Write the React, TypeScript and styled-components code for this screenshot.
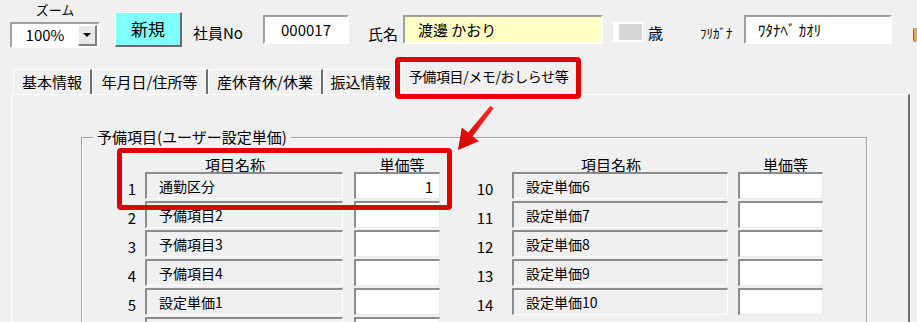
import styled, { createGlobalStyle } from 'styled-components';

const GlobalStyle = createGlobalStyle`
  html, body {
    margin: 0;
    padding: 0;
    background: #f0f0f0;
  }
  body {
    font-family: "Noto Sans CJK JP", "Noto Sans", sans-serif;
    color: #000;
  }
`;

type Item = { no: number; name: string; price: string };

const leftRows: Item[] = [
  { no: 1, name: '通勤区分', price: '1' },
  { no: 2, name: '予備項目2', price: '' },
  { no: 3, name: '予備項目3', price: '' },
  { no: 4, name: '予備項目4', price: '' },
  { no: 5, name: '設定単価1', price: '' },
];

const rightRows: Item[] = [
  { no: 10, name: '設定単価6', price: '' },
  { no: 11, name: '設定単価7', price: '' },
  { no: 12, name: '設定単価8', price: '' },
  { no: 13, name: '設定単価9', price: '' },
  { no: 14, name: '設定単価10', price: '' },
];

const tabs = [
  { label: '基本情報', w: 79 },
  { label: '年月日/住所等', w: 116 },
  { label: '産休育休/休業', w: 115 },
  { label: '振込情報', w: 76 },
];

function App(): React.ReactElement {
  return (
    <Screen>
      <GlobalStyle />
      <Header>
        <ZoomGroup>
          <ZoomLabel>ズーム</ZoomLabel>
          <ZoomSelect>
            <ZoomValue>100%</ZoomValue>
            <DropButton>
              <span className="caret" />
            </DropButton>
          </ZoomSelect>
        </ZoomGroup>
        <NewButton>新規</NewButton>
        <FieldLabel $w={70} $left={11} $top={23}>
          社員No
        </FieldLabel>
        <TextBox $w={86} $center>
          000017
        </TextBox>
        <FieldLabel $w={35} $left={19} $top={24}>
          氏名
        </FieldLabel>
        <TextBox $w={200} $bg="#ffffc6">
          渡邊 かおり
        </TextBox>
        <AgeBox />
        <FieldLabel $w={52} $left={5} $top={23}>
          歳
        </FieldLabel>
        <KanaLabel>ﾌﾘｶﾞﾅ</KanaLabel>
        <TextBox $w={148} $small>
          ﾜﾀﾅﾍﾞ ｶｵﾘ
        </TextBox>
        <HelpIcon />
      </Header>

      <TabBar>
        {tabs.map((t) => (
          <Tab key={t.label} $w={t.w}>
            {t.label}
          </Tab>
        ))}
        <ActiveTab>予備項目/メモ/おしらせ等</ActiveTab>
      </TabBar>

      <Panel>
        <Group>
          <legend>予備項目(ユーザー設定単価)</legend>
          <Columns>
            <Column $numW={26} $nameW={198} $priceW={86} $gap={11}>
              <RowHighlight />
              <span />
              <NameHeader>項目名称</NameHeader>
              <PriceHeader>単価等</PriceHeader>
              {leftRows.map((r) => (
                <Row key={r.no} {...r} />
              ))}
              <span />
              <NameCell />
              <PriceCell />
            </Column>
            <Column $numW={42} $nameW={216} $priceW={85} $gap={10} $numPad={12}>
              <span />
              <NameHeader>項目名称</NameHeader>
              <PriceHeader>単価等</PriceHeader>
              {rightRows.map((r) => (
                <Row key={r.no} {...r} />
              ))}
            </Column>
          </Columns>
        </Group>
      </Panel>

      <Arrow viewBox="0 0 60 62" width={60} height={62}>
        <defs>
          <linearGradient id="arrowRed" x1="1" y1="0" x2="0" y2="1">
            <stop offset="0" stopColor="#ff2a2a" />
            <stop offset="1" stopColor="#d40000" />
          </linearGradient>
        </defs>
        <polygon
          points="53.6,13.2 50.4,10.8 28.1,37.5 21.8,32.6 18,55 39,46.2 32.7,41.3"
          fill="url(#arrowRed)"
        />
      </Arrow>
    </Screen>
  );
}

function Row({ no, name, price }: Item) {
  return (
    <>
      <Num>{no}</Num>
      <NameCell>{name}</NameCell>
      <PriceCell>{price}</PriceCell>
    </>
  );
}

export default App;

const Screen = styled.div`
  position: relative;
  width: 917px;
  height: 322px;
  overflow: hidden;
  background: #f0f0f0;
`;

const Header = styled.header`
  display: flex;
  align-items: flex-start;
  height: 60px;
  padding-left: 10px;
  box-sizing: border-box;

  & > * {
    flex-shrink: 0;
  }
`;

const ZoomGroup = styled.div`
  display: flex;
  flex-direction: column;
  align-items: center;
  width: 90px;
`;

const ZoomLabel = styled.div`
  margin-top: 2px;
  font-size: 13px;
  line-height: 16px;
`;

const ZoomSelect = styled.div`
  display: flex;
  align-items: center;
  width: 90px;
  height: 26px;
  margin-top: 4px;
  box-sizing: border-box;
  background: #fff;
  border: 2px solid;
  border-color: #a0a0a0 #fff #fff #a0a0a0;
`;

const ZoomValue = styled.span`
  flex: 1;
  text-align: center;
  font-size: 15px;
  line-height: 20px;
`;

const DropButton = styled.span`
  display: flex;
  align-items: center;
  justify-content: center;
  width: 19px;
  height: 21px;
  margin-right: 1px;
  box-sizing: border-box;
  background: #e8e8e8;
  border-style: solid;
  border-width: 1px 2px 2px 1px;
  border-color: #fff #808080 #808080 #fff;

  & .caret {
    width: 0;
    height: 0;
    border-left: 4px solid transparent;
    border-right: 4px solid transparent;
    border-top: 4px solid #000;
  }
`;

const NewButton = styled.button`
  width: 67px;
  height: 35px;
  margin: 12px 0 0 15px;
  padding: 0;
  box-sizing: border-box;
  background: #80ffff;
  border-style: solid;
  border-width: 1px 2px 2px 1px;
  border-color: #fff #6a6a6a #6a6a6a #fff;
  font-family: inherit;
  font-size: 17px;
  line-height: 22px;
  color: #000;
`;

const FieldLabel = styled.span<{ $w: number; $left: number; $top: number }>`
  width: ${({ $w }) => $w}px;
  margin: ${({ $top }) => $top}px 0 0 ${({ $left }) => $left}px;
  font-size: 15px;
  line-height: 20px;
  white-space: nowrap;
`;

const TextBox = styled.div<{ $w: number; $bg?: string; $center?: boolean; $small?: boolean }>`
  display: flex;
  align-items: center;
  justify-content: ${({ $center }) => ($center ? 'center' : 'flex-start')};
  width: ${({ $w }) => $w}px;
  height: 29px;
  margin-top: 15px;
  padding-left: ${({ $center, $small }) => ($center ? 0 : $small ? 12 : 13)}px;
  box-sizing: border-box;
  background: ${({ $bg }) => $bg ?? '#fff'};
  border-style: solid;
  border-width: 2px;
  border-color: #a0a0a0 #fff #fff #a0a0a0;
  font-size: 15px;
  white-space: nowrap;
`;

const AgeBox = styled.div`
  width: 30px;
  height: 20px;
  margin: 22px 0 0 10px;
  box-sizing: border-box;
  background: #d6d6d6;
  border-style: solid;
  border-color: #fff;
  border-width: 2px 1px 2px 6px;
`;

const KanaLabel = styled.span`
  width: 44px;
  margin-top: 24px;
  font-size: 13px;
  line-height: 18px;
  white-space: nowrap;
`;

const HelpIcon = styled.div`
  width: 12px;
  height: 14px;
  margin: 28px 0 0 21px;
  border-radius: 2px;
  background: #f3a541;
  border-left: 1px solid #6b6b6b;
`;

const TabBar = styled.nav`
  display: flex;
  align-items: flex-end;
  height: 34px;
  padding-left: 13px;
`;

const Tab = styled.div<{ $w: number }>`
  width: ${({ $w }) => $w}px;
  height: 25px;
  box-sizing: border-box;
  border-top: 1px solid #fff;
  border-left: 1px solid #fff;
  border-right: 2px solid #6f6f6f;
  text-align: center;
  font-size: 15px;
  line-height: 23px;
  white-space: nowrap;
`;

const ActiveTab = styled.div`
  position: relative;
  z-index: 1;
  width: 178px;
  height: 35px;
  margin: 0 0 -1px 1px;
  box-sizing: border-box;
  background: #f0f0f0;
  border-top: 1px solid #fff;
  border-left: 1px solid #fff;
  border-right: 2px solid #6f6f6f;
  text-align: center;
  font-size: 14px;
  line-height: 30px;
  letter-spacing: -0.4px;
  white-space: nowrap;

  &::after {
    content: '';
    position: absolute;
    top: -4px;
    left: -6px;
    right: -5px;
    bottom: -4px;
    border: 5px solid #e00000;
    border-radius: 4px;
  }
`;

const Panel = styled.section`
  width: 899px;
  height: 260px;
  margin-left: 11px;
  padding: 32px 0 0 69px;
  box-sizing: border-box;
  border-top: 1px solid #fff;
  border-left: 1px solid #fff;
  border-right: 2px solid #6f6f6f;
`;

const Group = styled.fieldset`
  width: 786px;
  height: 240px;
  margin: 0;
  padding: 0;
  box-sizing: border-box;
  border: 1px solid #a0a0a0;
  box-shadow: inset 1px 1px 0 #fff, 1px 1px 0 #fff;

  & legend {
    margin-left: 11px;
    padding: 0 4px;
    background: #f0f0f0;
    font-size: 15px;
    line-height: 20px;
  }
`;

const Columns = styled.div`
  display: flex;
  gap: 30px;
  padding: 9px 0 0 37px;
`;

const Column = styled.div<{
  $numW: number;
  $nameW: number;
  $priceW: number;
  $gap: number;
  $numPad?: number;
}>`
  --gap: ${({ $gap }) => $gap}px;
  --num-pad: ${({ $numPad }) => $numPad ?? 0}px;
  position: relative;
  display: grid;
  grid-template-columns: ${({ $numW, $nameW, $priceW, $gap }) =>
    `${$numW}px ${$nameW}px ${$priceW + $gap}px`};
  grid-template-rows: 14px;
  grid-auto-rows: 27px;
  row-gap: 2px;
`;

const NameHeader = styled.div`
  padding-right: 18px;
  text-align: center;
  font-size: 15px;
  line-height: 18px;
  white-space: nowrap;
`;

const PriceHeader = styled.div`
  margin-left: var(--gap);
  padding-left: 10px;
  text-align: center;
  font-size: 15px;
  line-height: 18px;
  white-space: nowrap;
`;

const Num = styled.div`
  display: flex;
  align-items: flex-end;
  justify-content: center;
  padding-right: var(--num-pad);
  font-size: 15px;
  line-height: 20px;
`;

const NameCell = styled.div`
  display: flex;
  align-items: center;
  padding-left: 12px;
  box-sizing: border-box;
  border-style: solid;
  border-width: 2px 1px 1px 2px;
  border-color: #8c8c8c #fff #fff #8c8c8c;
  font-size: 14px;
  white-space: nowrap;
`;

const PriceCell = styled.div`
  display: flex;
  align-items: center;
  justify-content: flex-end;
  margin-left: var(--gap);
  padding-right: 6px;
  box-sizing: border-box;
  background: #fff;
  border-style: solid;
  border-width: 2px 1px 1px 2px;
  border-color: #8c8c8c #e8e8e8 #e8e8e8 #8c8c8c;
  font-size: 15px;
`;

const RowHighlight = styled.div`
  position: absolute;
  top: -8px;
  left: -2px;
  width: 335px;
  height: 62px;
  box-sizing: border-box;
  border: 5px solid #e00000;
  border-radius: 4px;
  pointer-events: none;
`;

const Arrow = styled.svg`
  position: absolute;
  left: 440px;
  top: 95px;
`;
